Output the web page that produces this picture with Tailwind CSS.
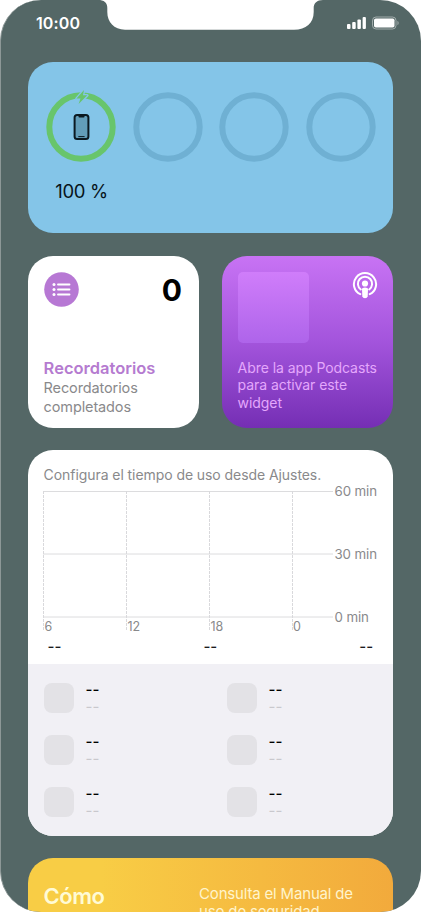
<!DOCTYPE html>
<html lang="es">
<head>
<meta charset="utf-8">
<title>Widgets</title>
<script src="https://cdn.jsdelivr.net/npm/@tailwindcss/browser@4"></script>
</head>
<body class="bg-white font-['Inter','Liberation_Sans',sans-serif]">
<main class="relative w-[421px] h-[912px] overflow-hidden rounded-[41px] bg-[#546766] border-l border-[#8d9897]">
  <svg class="absolute left-[-1px] top-0" width="421" height="31" viewBox="0 0 421 31"><path d="M98 0C104 0 107.300 2.500 107.300 8V12C107.300 22 114 29.700 125 29.700H294C306 29.700 313.700 23 313.700 12V8C313.700 3 317 0 323 0Z" fill="#fff"/></svg>
  <header class="relative flex h-[61.500px] justify-between pl-[35px] pr-[22px] pt-[13px]">
    <span class="h-5 text-[16px] leading-5 font-semibold tracking-[0.100px] text-white">10:00</span>
    <svg class="mt-[3px]" width="53" height="14" viewBox="0 0 53 14"><g fill="#fff"><rect x="1" y="8" width="3.500" height="5" rx="1"/><rect x="6.200" y="6" width="3.500" height="7" rx="1"/><rect x="11.400" y="3.500" width="3.500" height="9.500" rx="1"/><rect x="16.600" y="1" width="3.300" height="12" rx="1"/><rect x="28" y="2.500" width="20.500" height="9" rx="1.800"/><path d="M51.500 4.800c1.500.7 1.500 3.700 0 4.400z" opacity=".5"/></g><rect x="26.500" y="1" width="23.500" height="12" rx="3.500" fill="none" stroke="#fff" stroke-opacity=".45"/></svg>
  </header>
  <div class="flex w-[365.500px] ml-[26.600px] flex-col gap-[22.400px]">
    <section class="h-[171.900px] rounded-[25px] bg-[#84c5e8] pt-[30.500px]">
      <div class="flex gap-[16.500px] pl-[18.600px]">
        <svg class="overflow-visible" width="70" height="70" viewBox="0 0 70 70"><circle cx="35" cy="35" r="31.700" fill="none" stroke="#68c56c" stroke-width="6"/><path d="M38-2 30.500 6.600H34.500L32.600 12 41.300 3.300H37Z" fill="#68c56c" stroke="#84c5e8" stroke-width="2.600" stroke-linejoin="round" paint-order="stroke"/><rect x="28.600" y="23.100" width="13.800" height="24" rx="2.500" fill="#629db9" stroke="#0b1921" stroke-width="2"/><path d="M32.500 23.500h6v1.300q0 .8-.8.800h-4.400q-.8 0-.8-.8z" fill="#0b1921"/><path d="M32.700 44.600h5.500" stroke="#0b1921" stroke-width="1" stroke-linecap="round"/></svg>
        <svg width="70" height="70" viewBox="0 0 70 70"><circle cx="35" cy="35" r="31.700" fill="none" stroke="#6fb0d3" stroke-width="6"/></svg>
        <svg width="70" height="70" viewBox="0 0 70 70"><circle cx="35" cy="35" r="31.700" fill="none" stroke="#6fb0d3" stroke-width="6"/></svg>
        <svg width="70" height="70" viewBox="0 0 70 70"><circle cx="35" cy="35" r="31.700" fill="none" stroke="#6fb0d3" stroke-width="6"/></svg>
      </div>
      <p class="w-[108px] pt-[17px] text-center text-[18.500px] leading-6 tracking-[-0.300px] text-[#07141b]">100 %</p>
    </section>

    <div class="flex justify-between">
      <section class="h-[172px] w-[171.500px] rounded-[25px] bg-white px-4 pt-4">
        <div class="flex h-[84px] justify-between">
          <svg width="35" height="35" viewBox="0 0 35 35"><circle cx="17.500" cy="17.500" r="17.300" fill="#b778d4"/><g fill="#fff"><circle cx="10" cy="12.500" r="1.500"/><circle cx="10" cy="17.500" r="1.500"/><circle cx="10" cy="22.500" r="1.500"/></g><path d="M14 12.500H25.500M14 17.500H25.500M14 22.500H25.500" stroke="#fff" stroke-width="1.900" stroke-linecap="round"/></svg>
          <span class="h-9 pr-[1px] text-[30px] leading-9 font-bold text-black">0</span>
        </div>
        <h2 class="text-[16.500px] leading-[22px] pt-[1px] font-semibold tracking-[0px] whitespace-nowrap text-[#b57bd0]">Recordatorios</h2>
        <p class="pt-[0.600px] text-[14.500px] leading-[18.500px] tracking-[-0.120px] text-[#89898b]">Recordatorios<br>completados</p>
      </section>
      <section class="h-[172px] w-[171.500px] rounded-[25px] bg-linear-to-b from-[#c873f4] via-[#a354dc] to-[#752eb4] pl-4 pr-[15.500px] pt-4">
        <div class="flex h-[87px] justify-between">
          <div class="size-[71px] rounded-[5px] bg-linear-to-b from-[#d07dfa] to-[#ae64ea]"></div>
          <svg width="26" height="27" viewBox="0 0 26 27"><g fill="none" stroke="#fff" stroke-width="2" stroke-linecap="round"><path d="M8.300 22.200A11.100 11.100 0 1 1 17.700 22.200"/><path d="M8.800 17.500A7.100 7.100 0 1 1 17.200 17.500"/></g><circle cx="13" cy="11.500" r="3.100" fill="#fff"/><path d="M10 17.300Q10 15.500 13 15.500T16 17.300L15.700 24.200Q15.300 26.200 13 26.200T10.300 24.200Z" fill="#fff"/></svg>
        </div>
        <p class="text-[14px] leading-[17.500px] tracking-[-0.060px] whitespace-nowrap text-[#e4a7fc]">Abre la app Podcasts<br>para activar este<br>widget</p>
      </section>
    </div>

    <section class="h-[385.500px] overflow-hidden rounded-[25px] bg-white">
      <div class="h-[213.500px] px-4 pt-4">
        <p class="text-[14px] leading-[18px] tracking-[-0.070px] whitespace-nowrap text-[#89898b]">Configura el tiempo de uso desde Ajustes.</p>
        <svg class="-ml-[0.600px] block" width="340" height="150" viewBox="0 0 340 150">
          <path d="M0 7.500H290M0 70H290M0 133H290" stroke="#dcdcde" fill="none"/>
          <path d="M.5 7V147M83.500 7V147M166.500 7V147M249.500 7V147" stroke="#d9d9dc" stroke-dasharray="3 1" fill="none"/>
          <g fill="#89898b" font-size="13.300" letter-spacing="-.1"><text x="291.500" y="12">60 min</text><text x="291.500" y="74.500">30 min</text><text x="291.500" y="137.500">0 min</text></g>
          <g fill="#89898b" font-size="12.500"><text x="1.500" y="147">6</text><text x="84.500" y="147">12</text><text x="167.500" y="147">18</text><text x="250" y="147">0</text></g>
        </svg>
        <div class="flex justify-between px-1 text-[15px] leading-5 pt-[3px] font-medium text-[#1c1c1e]"><span>--</span><span>--</span><span>--</span></div>
      </div>
      <div class="grid h-[172px] grid-cols-[183px_1fr] content-start gap-y-[22px] bg-[#f1f0f5] pl-4 pt-[19px]">
        <div class="flex h-[30px] gap-[12px]"><i class="size-[30px] rounded-[8px] bg-[#e3e2e6]"></i><div class="-mt-[2px] text-[15px] leading-[17.500px]"><p class="font-medium text-black">--</p><p class="text-[#c9c8cd]">--</p></div></div>
        <div class="flex h-[30px] gap-[12px]"><i class="size-[30px] rounded-[8px] bg-[#e3e2e6]"></i><div class="-mt-[2px] text-[15px] leading-[17.500px]"><p class="font-medium text-black">--</p><p class="text-[#c9c8cd]">--</p></div></div>
        <div class="flex h-[30px] gap-[12px]"><i class="size-[30px] rounded-[8px] bg-[#e3e2e6]"></i><div class="-mt-[2px] text-[15px] leading-[17.500px]"><p class="font-medium text-black">--</p><p class="text-[#c9c8cd]">--</p></div></div>
        <div class="flex h-[30px] gap-[12px]"><i class="size-[30px] rounded-[8px] bg-[#e3e2e6]"></i><div class="-mt-[2px] text-[15px] leading-[17.500px]"><p class="font-medium text-black">--</p><p class="text-[#c9c8cd]">--</p></div></div>
        <div class="flex h-[30px] gap-[12px]"><i class="size-[30px] rounded-[8px] bg-[#e3e2e6]"></i><div class="-mt-[2px] text-[15px] leading-[17.500px]"><p class="font-medium text-black">--</p><p class="text-[#c9c8cd]">--</p></div></div>
        <div class="flex h-[30px] gap-[12px]"><i class="size-[30px] rounded-[8px] bg-[#e3e2e6]"></i><div class="-mt-[2px] text-[15px] leading-[17.500px]"><p class="font-medium text-black">--</p><p class="text-[#c9c8cd]">--</p></div></div>
      </div>
    </section>

    <section class="flex h-[172px] rounded-[25px] bg-linear-to-r from-[#f8cd45] from-20% to-[#f2aa3c] pl-4 pt-[23.500px]">
      <h2 class="w-[155.500px] text-[22px] leading-7 font-semibold tracking-[-0.500px] text-[#fffbd5]">Cómo</h2>
      <p class="pt-[3px] text-[15px] leading-[18px] tracking-[-0.180px] whitespace-nowrap text-[#fff4cc]">Consulta el Manual de<br>uso de seguridad</p>
    </section>
  </div>
</main>
</body>
</html>
